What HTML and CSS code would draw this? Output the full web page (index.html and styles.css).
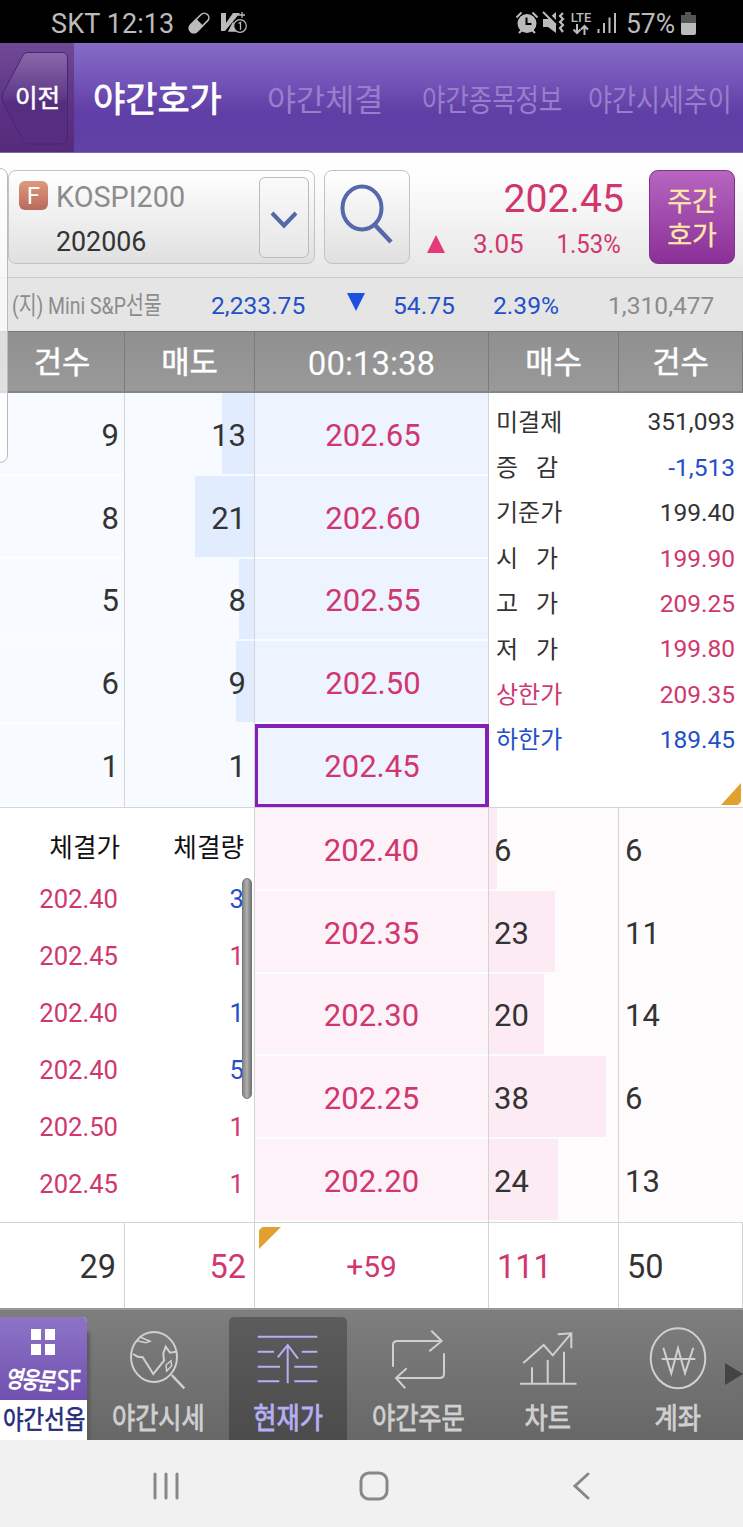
FILE: index.html
```html
<!DOCTYPE html>
<html lang="ko">
<head>
    <meta charset="UTF-8">
    <meta name="viewport" content="width=device-width, initial-scale=1.0">
    <title>야간호가</title>
    <link rel="stylesheet" href="styles.css">
</head>
<body>
    <div class="status-bar">
        <span class="carrier">SKT 12:13</span>
        <svg class="st-pill" width="24" height="24" viewBox="0 0 24 24">
            <g transform="rotate(-45 12 12)">
                <rect x="0" y="7.500" width="24" height="9" rx="4.500" fill="none" stroke="#bbb" stroke-width="1.600"/>
                <path d="M13 6.700H5a5.300 5.300 0 0 0 0 10.600h8z" fill="#bbb"/>
            </g>
        </svg>
        <svg class="st-v3" width="28" height="24" viewBox="0 0 28 24">
            <path d="M1 2h5v10L13 2h7L5 20H1z" fill="#bbb"/>
            <path d="M9 20l4-8 3 8zM18 4h7M22 1v6" fill="#bbb" stroke="#bbb" stroke-width="1.3"/>
            <circle cx="20" cy="15" r="6.3" fill="#000" stroke="#bbb" stroke-width="1.2"/>
            <path d="M18.5 12.5l2-1.2v7.5" fill="none" stroke="#bbb" stroke-width="1.3"/>
        </svg>
        <svg class="st-alarm" width="24" height="24" viewBox="0 0 24 24">
            <circle cx="12" cy="12.5" r="9.5" fill="#bbb"/>
            <path d="M1.5 6.5l5-5M22.5 6.5l-5-5M4 22l3-3M20 22l-3-3" stroke="#bbb" stroke-width="2"/>
            <path d="M11.5 6.5v6.500h5" fill="none" stroke="#000" stroke-width="2"/>
        </svg>
        <svg class="st-mute" width="24" height="24" viewBox="0 0 24 24">
            <path d="M1 8h5l8-7v21l-8-6H1z" fill="#bbb"/>
            <path d="M3 0l12 12" stroke="#000" stroke-width="3"/>
            <path d="M1 1l13 13" stroke="#bbb" stroke-width="2"/>
            <path d="M21 2l-3 3 3 3-3 3 3 3-3 3 3 4" fill="none" stroke="#bbb" stroke-width="2.2"/>
        </svg>
        <div class="lte">
            <span>LTE</span>
            <svg width="18" height="11" viewBox="0 0 18 11">
                <path d="M5 0v9M1.5 5.5L5 9l3.500-3.500M12.500 11V2M9 5.500L12.500 2l3.500 3.500" fill="none" stroke="#bbb" stroke-width="2"/>
            </svg>
        </div>
        <svg class="st-signal" width="20" height="22" viewBox="0 0 20 22">
            <path d="M1.500 17v4M7 11v10M12.500 5.500V21M18 1v20" stroke="#bbb" stroke-width="2"/>
        </svg>
        <span class="percent">57%</span>
        <svg class="st-battery" width="15" height="23" viewBox="0 0 15 23">
            <path d="M0 3h4V0h6v3h5v9H0z" fill="#555"/>
            <path d="M0 11h15v10q0 2-2 2H2q-2 0-2-2z" fill="#bbb"/>
        </svg>
    </div>

    <div class="tab-bar">
        <div class="back">
            <svg width="74" height="110" viewBox="0 0 74 110">
                <defs>
                    <linearGradient id="backFill" x1="0" y1="0" x2="0" y2="1">
                        <stop offset="0" stop-color="#8b68ab"/>
                        <stop offset="0.48" stop-color="#5f3a8a"/>
                        <stop offset="0.54" stop-color="#552e80"/>
                        <stop offset="1" stop-color="#572f82"/>
                    </linearGradient>
                </defs>
                <path d="M27 9.500H62q5.500 0 5.500 6V94q0 7-6 7H29q-4 0-6-4L3 60q-2-5 0-10L22 14q2-4.500 5-4.500z" fill="url(#backFill)" stroke="#4a2472" stroke-width="1"/>
            </svg>
            <span>이전</span>
        </div>
        <div class="tab tab-1 active"><span>야간호가</span></div>
        <div class="tab tab-2"><span>야간체결</span></div>
        <div class="tab tab-3"><span>야간종목정보</span></div>
        <div class="tab tab-4"><span>야간시세추이</span></div>
    </div>

    <div class="stock-bar">
        <div class="stock-select">
            <div class="stock-name">
                <div class="name-line"><span class="badge">F</span><span class="name">KOSPI200</span></div>
                <div class="code">202006</div>
            </div>
            <div class="dropdown">
                <svg width="28" height="18" viewBox="0 0 28 18"><path d="M2 2l12 12.500L26 2" fill="none" stroke="#5468aa" stroke-width="4"/></svg>
            </div>
        </div>
        <div class="search">
            <svg width="54" height="62" viewBox="0 0 54 62"><ellipse cx="22" cy="25" rx="19.500" ry="21.500" fill="none" stroke="#5468aa" stroke-width="4"/><path d="M34 41l17 18" stroke="#5468aa" stroke-width="4.500"/></svg>
        </div>
        <div class="quote">
            <div class="last">202.45</div>
            <div class="change">
                <svg width="18" height="18" viewBox="0 0 18 18"><path d="M9 0l9 18H0z" fill="#e23a7a"/></svg>
                <span class="diff">3.05</span>
                <span class="rate">1.53%</span>
            </div>
        </div>
        <div class="day-btn">주간<br>호가</div>
    </div>

    <div class="ticker">
        <div class="t-name"><span>(지) Mini S&amp;P선물</span></div>
        <div class="t-price">2,233.75</div>
        <svg width="18" height="18" viewBox="0 0 18 18"><path d="M0 0h18L9 18z" fill="#1c50e0"/></svg>
        <div class="t-diff">54.75</div>
        <div class="t-rate">2.39%</div>
        <div class="t-vol">1,310,477</div>
    </div>

    <div class="book-head">
        <div>건수</div>
        <div>매도</div>
        <div class="clock">00:13:38</div>
        <div>매수</div>
        <div>건수</div>
    </div>

    <div class="asks">
        <div class="col ask-count">
            <div>9</div>
            <div>8</div>
            <div>5</div>
            <div>6</div>
            <div>1</div>
        </div>
        <div class="col ask-qty">
            <div style="background-size: 32px 100%">13</div>
            <div style="background-size: 59px 100%">21</div>
            <div style="background-size: 15px 100%">8</div>
            <div style="background-size: 18px 100%">9</div>
            <div style="background-size: 0 100%">1</div>
        </div>
        <div class="col ask-price">
            <div>202.65</div>
            <div>202.60</div>
            <div>202.55</div>
            <div>202.50</div>
            <div class="current">202.45</div>
        </div>
        <div class="info">
            <div><span>미결제</span><b>351,093</b></div>
            <div><span class="wide">증 감</span><b class="down">-1,513</b></div>
            <div><span>기준가</span><b>199.40</b></div>
            <div><span class="wide">시 가</span><b class="up">199.90</b></div>
            <div><span class="wide">고 가</span><b class="up">209.25</b></div>
            <div><span class="wide">저 가</span><b class="up">199.80</b></div>
            <div class="up"><span>상한가</span><b>209.35</b></div>
            <div class="down"><span>하한가</span><b>189.45</b></div>
            <i class="corner-br"></i>
        </div>
    </div>

    <div class="bids">
        <div class="trades">
            <div class="trade-head"><span>체결가</span><span>체결량</span></div>
            <div class="trade"><span>202.40</span><span class="down">3</span></div>
            <div class="trade"><span>202.45</span><span>1</span></div>
            <div class="trade"><span>202.40</span><span class="down">1</span></div>
            <div class="trade"><span>202.40</span><span class="down">5</span></div>
            <div class="trade"><span>202.50</span><span>1</span></div>
            <div class="trade"><span>202.45</span><span>1</span></div>
            <i class="scrollbar"></i>
        </div>
        <div class="col bid-price">
            <div>202.40</div>
            <div>202.35</div>
            <div>202.30</div>
            <div>202.25</div>
            <div>202.20</div>
        </div>
        <div class="col bid-qty">
            <div style="background-size: 8px 100%">6</div>
            <div style="background-size: 66px 100%">23</div>
            <div style="background-size: 55px 100%">20</div>
            <div style="background-size: 117px 100%">38</div>
            <div style="background-size: 69px 100%">24</div>
        </div>
        <div class="col bid-count">
            <div>6</div>
            <div>11</div>
            <div>14</div>
            <div>6</div>
            <div>13</div>
        </div>
    </div>

    <div class="totals">
        <div class="tot-1">29</div>
        <div class="tot-2 up">52</div>
        <div class="tot-3 up"><i class="corner-tl"></i>+59</div>
        <div class="tot-4 up">111</div>
        <div class="tot-5">50</div>
    </div>

    <div class="menu">
        <div class="home">
            <div class="home-logo">
                <svg width="24" height="26" viewBox="0 0 24 26"><path d="M0 0h10v11H0zM14 0h10v11H14zM0 15h10v11H0zM14 15h10v11H14z" fill="#fff"/></svg>
                <div class="brand"><em>영웅문</em><span>SF</span></div>
            </div>
            <div class="home-label"><span>야간선옵</span></div>
        </div>
        <div class="menu-item">
            <svg width="64" height="64" viewBox="0 0 64 64">
                <ellipse cx="28" cy="31" rx="23" ry="25"/>
                <path d="M45.700 49L58.300 62.300" stroke-width="2.500"/>
                <path d="M7 28l4.700 2.700 5 .6L27.300 48 38 34.700l-.7-7.400 2.400-6.600 4.300 6 6-1"/>
                <path d="M13.300 10.700L24 15.300l-4 1.400-9-2M45 34.700L40 39l.7 6 5-5.300z" stroke-width="1.500"/>
            </svg>
            <span>야간시세</span>
        </div>
        <div class="menu-item selected">
            <svg width="64" height="64" viewBox="0 0 64 64">
                <path d="M1.700 10.700h59.600M1.700 25.700H18M45.700 25.700h15.600M1.700 40.700H24M38.300 40.700h23M1.700 55.300h21.600M38.300 55.300h23"/>
                <path d="M31.700 57.300V19M21.700 31.300l10-12.300L42 32.700"/>
            </svg>
            <span>현재가</span>
        </div>
        <div class="menu-item">
            <svg width="64" height="64" viewBox="0 0 64 64">
                <path d="M7 40.700V19q0-4 4.500-4H55M45.300 4.700L55.700 15 43.300 25.300M58 27.300V48q0 4-4.500 4H10M20.700 42.300L10 52l9.300 10.300"/>
            </svg>
            <span>야간주문</span>
        </div>
        <div class="menu-item">
            <svg width="64" height="64" viewBox="0 0 64 64">
                <path d="M4 57.700h56.500M16 57V41.300M31.700 57V34M48 57V25.700M7.300 37l20.400-18 9 10.300 18.600-22M41.700 8.300l13.600-1V22.300"/>
            </svg>
            <span>차트</span>
        </div>
        <div class="menu-item">
            <svg width="64" height="64" viewBox="0 0 64 64">
                <ellipse cx="32" cy="32.300" rx="27.300" ry="30"/>
                <path d="M17.300 21.700l8 25.600 6.700-25 7 25 8.300-25.600M15.700 33h33.600"/>
            </svg>
            <span>계좌</span>
        </div>
        <svg class="more" width="18" height="22" viewBox="0 0 18 22"><path d="M0 0l18 11L0 22z" fill="#444"/></svg>
    </div>

    <div class="nav-bar">
        <svg width="28" height="28" viewBox="0 0 28 28"><path d="M3 2v24M14 2v24M25 2v24"/></svg>
        <svg width="32" height="32" viewBox="0 0 32 32"><rect x="3" y="3" width="26" height="26" rx="8"/></svg>
        <svg width="28" height="28" viewBox="0 0 28 28"><path d="M20 2L7 14 20 26"/></svg>
    </div>

    <!-- side drawer handle -->
    <div class="drawer"></div>
</body>
</html>
```
FILE: styles.css
```css
* {
    box-sizing: border-box;
}
body {
    margin: 0;
    width: 743px;
    height: 1527px;
    position: relative;
    overflow: hidden;
    background: #fff;
    color: #333;
    font-family: Roboto, "Noto Sans CJK KR", sans-serif;
    line-height: 1;
    white-space: nowrap;
}
svg {
    display: block;
    flex: none;
}
.up {
    color: #d1376f;
}
.down {
    color: #2350c8;
}

/* status bar */
.status-bar {
    display: flex;
    align-items: center;
    height: 43px;
    padding-top: 3px;
    background: #000;
    color: #bbb;
    font-size: 27px;
}
.carrier {
    width: 187px;
    padding: 2px 0 0 51px;
    flex: none;
    letter-spacing: 0.1px;
}
.st-v3 {
    margin-left: 9px;
}
.st-alarm {
    margin-left: 267px;
}
.st-mute {
    margin-left: 3px;
}
.lte {
    display: flex;
    flex-direction: column;
    align-items: center;
    width: 24px;
    margin-left: 3px;
    font-size: 13px;
    font-weight: 500;
}
.st-signal {
    margin-left: 4px;
}
.percent {
    width: 56px;
    margin-left: 9px;
    padding-top: 2px;
    font-size: 27px;
    transform: scaleX(0.98);
    transform-origin: 0 50%;
}
.st-battery {
    margin-left: -1px;
}

/* tabs */
.tab-bar {
    display: flex;
    height: 110px;
    background: linear-gradient(#866bc6, #7354b8 35%, #6645ab 55%, #5f3fa5 65%, #6041a6);
    border-bottom: 1px solid #7a67b0;
}
.back {
    position: relative;
    width: 74px;
    background: linear-gradient(#704a96, #5c3184 60%, #572b7b);
}
.back span {
    position: absolute;
    left: 15px;
    top: 44px;
    color: #fff;
    font-size: 24.500px;
    -webkit-text-stroke: 0.5px;
}
.tab {
    display: flex;
    align-items: center;
    padding-top: 6px;
    color: #977fcc;
    font-size: 31px;
}
.tab span {
    transform-origin: 0 50%;
}
.tab-1 {
    width: 193px;
    padding-left: 19px;
}
.active {
    color: #fff;
    font-size: 35px;
    -webkit-text-stroke: 0.8px;
}
.tab-2 {
    width: 155px;
}
.tab-2 span {
    transform: scaleX(1.02);
}
.tab-3 {
    width: 166px;
}
.tab-3 span {
    transform: scaleX(0.82);
}
.tab-4 {
    width: 150px;
}
.tab-4 span {
    transform: scaleX(0.84);
}

/* stock header */
.stock-bar {
    display: flex;
    height: 125px;
    padding: 17px 8px 0 8px;
    background: linear-gradient(#fff, #fdfdfd 20%, #e6e6e6);
    border-bottom: 1px solid #ccc;
}
.stock-select,
.search {
    height: 94px;
    border: 1px solid #c2c2c2;
    border-radius: 8px;
    background: linear-gradient(#fff, #e0e0e0);
}
.stock-select {
    display: flex;
    justify-content: space-between;
    width: 307px;
    padding: 6px 5px 0 10px;
}
.name-line {
    display: flex;
    gap: 8px;
    align-items: center;
    height: 37px;
}
.badge {
    width: 29px;
    height: 29px;
    border-radius: 6px;
    background: linear-gradient(#dd9a7b, #b86a5c);
    color: #fff;
    font-size: 24px;
    line-height: 30px;
    text-align: center;
}
.name {
    padding-top: 3px;
    color: #8c8c8c;
    font-size: 28.800px;
}
.code {
    padding: 15px 0 0 37px;
    font-size: 26.800px;
}
.dropdown {
    display: flex;
    align-items: center;
    justify-content: center;
    width: 50px;
    height: 81px;
    padding-top: 5px;
    border: 1px solid #bbb;
    border-radius: 6px;
    background: linear-gradient(#fafafa, #e6e6e6);
}
.search {
    width: 86px;
    margin-left: 9px;
    padding: 12px 0 0 15px;
}
.quote {
    width: 216px;
    padding-top: 10px;
    color: #d1376f;
}
.last {
    padding-right: 2px;
    font-size: 39.200px;
    text-align: right;
}
.change {
    display: flex;
    align-items: center;
    padding: 12px 0 0 17px;
    font-size: 26px;
}
.diff {
    padding-left: 28px;
}
.rate {
    padding-left: 33px;
    transform: scaleX(0.92);
    transform-origin: 100% 50%;
    margin-left: -6px;
}
.day-btn {
    width: 86px;
    height: 94px;
    margin-left: 23px;
    flex: none;
    padding-top: 14px;
    border: 1px solid #80308f;
    border-radius: 9px;
    background: linear-gradient(#b766c0, #8a2f97);
    color: #ffe9a6;
    font-size: 27px;
    line-height: 34px;
    text-align: center;
    -webkit-text-stroke: 0.3px;
}

/* underlying future ticker */
.ticker {
    display: flex;
    align-items: center;
    height: 53px;
    padding-top: 4px;
    background: #e5e5e5;
    color: #2350c8;
    font-size: 24.600px;
}
.ticker div {
    flex: none;
}
.ticker svg {
    margin: -9px 0 0 41px;
}
.t-name {
    width: 211px;
    padding-left: 12px;
    color: #8c8c8c;
}
.t-name span {
    display: inline-block;
    transform: scaleX(0.79);
    transform-origin: 0 50%;
}
.t-price {
    width: 95px;
}
.t-diff {
    width: 128px;
    padding-left: 28px;
}
.t-rate {
    width: 115px;
}
.t-vol {
    color: #8c8c8c;
}

/* order book */
.book-head,
.totals {
    display: grid;
    grid-template-columns: 125px 130px 234px 130px 124px;
}
.book-head {
    height: 62px;
    background: linear-gradient(#909090, #999);
    border-top: 1px solid #777;
    border-bottom: 2px solid #858585;
    color: #fff;
    font-size: 30.800px;
}
.book-head div {
    display: flex;
    align-items: center;
    justify-content: center;
    padding-top: 3px;
    border-right: 1px solid #7b7b7b;
    -webkit-text-stroke: 0.5px;
}
.book-head .clock {
    font-size: 33px;
    -webkit-text-stroke: 0;
}
.asks,
.bids {
    display: grid;
    height: 415px;
    border-bottom: 1px solid #d4d4d4;
    font-size: 31px;
}
.asks {
    grid-template-columns: 125px 130px 234px 254px;
}
.bids {
    grid-template-columns: 255px 234px 130px 124px;
}
.col {
    display: grid;
    grid-template-rows: repeat(5, 1fr);
    border-right: 1px solid #d4d4d8;
}
.col div {
    display: flex;
    align-items: center;
    padding-top: 4px;
    border-bottom: 2px solid transparent;
    background-repeat: no-repeat;
    background-clip: padding-box;
}
.ask-count,
.ask-qty {
    background: #f7faff;
}
.ask-count div,
.ask-qty div {
    justify-content: flex-end;
}
.ask-count div {
    padding-right: 5px;
    border-bottom-color: #fbfdff;
}
.ask-qty div {
    padding-right: 8px;
    background-image: linear-gradient(#e1edff, #e1edff);
    background-position: right top;
}
.ask-price,
.bid-price {
    background: #edf4ff;
    color: #d1376f;
}
.ask-price div,
.bid-price div {
    justify-content: center;
    border-bottom-color: #fcfdff;
}
.ask-price div {
    padding-left: 3px;
}
.ask-price .current {
    margin-right: -1px;
    padding: 1px 0 0 1px;
    border: 4px solid #8420b8;
    border-width: 4px 4px 3px 3px;
}
.bid-price {
    background: #fef2f9;
}
.bid-qty,
.bid-count {
    background: #fefbfc;
}
.bid-qty div,
.bid-count div {
    padding-left: 6px;
}
.bid-qty div {
    padding-left: 5px;
    background-image: linear-gradient(#fcebf3, #fcebf3);
}
.bid-count {
    border-right: 0;
}
.info {
    position: relative;
    padding: 7px 8px 0 7px;
    font-size: 24.500px;
}
.info div {
    display: flex;
    justify-content: space-between;
    align-items: center;
    height: 45.400px;
}
.info span {
    font-size: 24px;
}
.info b {
    font-weight: 400;
}
.info .wide {
    word-spacing: 12px;
}
.corner-br {
    position: absolute;
    right: 2px;
    bottom: 2px;
    width: 20px;
    height: 22px;
    background: #e2a12e;
    clip-path: polygon(100% 0, 100% 85%, 85% 100%, 0 100%);
}

/* recent trades */
.trades {
    position: relative;
    padding-top: 17px;
    border-right: 1px solid #d4d4d8;
    color: #d1376f;
    font-size: 25.600px;
}
.trade-head,
.trade {
    display: grid;
    grid-template-columns: 118px 126px;
    align-items: center;
    height: 57px;
    text-align: right;
}
.trade-head {
    height: 46px;
    padding-top: 2px;
    grid-template-columns: 120px 124px;
    color: #111;
}
.scrollbar {
    position: absolute;
    right: 2px;
    top: 70px;
    width: 10px;
    height: 221px;
    border: 1px solid #777;
    border-radius: 5px;
    background: linear-gradient(90deg, #888, #b0b0b0 50%, #777);
}
.totals {
    height: 85px;
    font-size: 32.500px;
}
.totals div {
    position: relative;
    display: flex;
    align-items: center;
    padding-top: 3px;
    border-right: 1px solid #d4d4d4;
}
.totals .tot-1,
.totals .tot-2 {
    justify-content: flex-end;
    padding-right: 8px;
}
.totals .tot-3 {
    justify-content: center;
    font-size: 30px;
}
.totals .tot-4,
.totals .tot-5 {
    padding-left: 8px;
}
.corner-tl {
    position: absolute;
    left: 4px;
    top: 4px;
    width: 22px;
    height: 22px;
    background: #e2a12e;
    clip-path: polygon(15% 0, 100% 0, 0 100%, 0 15%);
}

/* bottom menu */
.menu {
    display: flex;
    height: 132px;
    padding-top: 7px;
    overflow: hidden;
    background: linear-gradient(#7e7e7e, #676767);
    border-top: 2px solid #989898;
}
.home {
    width: 87px;
    margin-right: 6px;
    border-radius: 0 5px 0 0;
    background: #fff;
    box-shadow: 3px 14px 3px 0 #5c5c5c;
}
.home-logo {
    height: 83px;
    padding-top: 12px;
    border-radius: 0 5px 0 0;
    background: linear-gradient(#8d74c8, #7150af);
    color: #fff;
}
.home-logo svg {
    margin-left: 31px;
}
.brand {
    display: flex;
    align-items: center;
    height: 32px;
    margin-top: 8px;
    padding-left: 5px;
    font-size: 26px;
}
.brand em {
    width: 52px;
    flex: none;
    font-size: 24px;
    font-weight: 700;
    letter-spacing: -2px;
    transform: scaleX(0.8) rotate(3deg);
    transform-origin: 0 50%;
}
.brand span {
    font-family: "Noto Sans", sans-serif;
    font-size: 27px;
    transform: scaleX(0.83);
    transform-origin: 0 50%;
    -webkit-text-stroke: 0.5px;
}
.home-label {
    height: 40px;
    padding: 7px 0 0 3px;
    color: #262b78;
    font-size: 26px;
    -webkit-text-stroke: 0.6px;
}
.home-label span {
    display: inline-block;
    transform: scaleX(0.86);
    transform-origin: 0 50%;
}
.menu-item {
    display: flex;
    flex-direction: column;
    align-items: center;
    width: 118px;
    margin: 0 6px;
    padding-top: 9px;
    flex: none;
    border-radius: 5px 5px 0 0;
    color: #d0d0d0;
    font-size: 29px;
    -webkit-text-stroke: 0.8px;
}
.menu-item svg {
    fill: none;
    stroke: #d0d0d0;
    stroke-width: 2;
}
.menu-item span {
    margin-top: 15px;
    transform: scaleX(0.87);
}
.selected {
    background: linear-gradient(#5c5c5c, #4b4b4b);
    color: #b5b0f5;
}
.selected svg {
    stroke: #b5b0f5;
}
.more {
    margin: 46px 0 0 -18px;
}
.nav-bar {
    display: flex;
    align-items: center;
    height: 87px;
    padding: 5px 0 0 152px;
    gap: 178px;
    background: #f1f1f1;
}
.nav-bar svg {
    fill: none;
    stroke: #888;
    stroke-width: 3;
    stroke-linecap: round;
}
.drawer {
    position: absolute;
    left: -1px;
    top: 168px;
    width: 9px;
    height: 295px;
    border: 1px solid #bbb;
    border-radius: 0 8px 8px 0;
    background: rgba(255, 255, 255, 0.7);
}
```
